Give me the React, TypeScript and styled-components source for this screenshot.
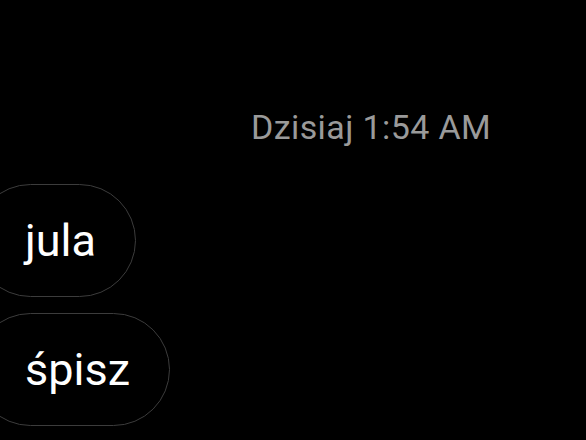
import styled, { createGlobalStyle } from "styled-components";

const GlobalStyle = createGlobalStyle`
  html, body {
    margin: 0;
    padding: 0;
    background: #000;
  }
  body {
    font-family: Roboto, "Noto Sans", sans-serif;
  }
`;

const Screen = styled.div`
  width: 586px;
  height: 440px;
  overflow: hidden;
  background: #000;
  display: flex;
  flex-direction: column;
`;

const Stamp = styled.div`
  margin-top: 105px;
  padding-left: 251px;
  font-size: 34px;
  letter-spacing: 0.4px;
  line-height: 44px;
  color: #9a9a9a;
`;

const Thread = styled.div`
  display: flex;
  flex-direction: column;
  align-items: flex-start;
  gap: 16px;
  margin-top: 35px;
  margin-left: -26px;
`;

const Bubble = styled.div`
  height: 111px;
  display: flex;
  align-items: center;
  padding: 0 39px 0 50px;
  border: 1.5px solid #3c3c3c;
  border-radius: 57px;
  color: #fff;
  font-size: 45px;
`;

const messages = ["jula", "śpisz"];

export default function App() {
  return (
    <Screen>
      <GlobalStyle />
      <Stamp>Dzisiaj 1:54 AM</Stamp>
      <Thread>
        {messages.map((m) => (
          <Bubble key={m}>{m}</Bubble>
        ))}
      </Thread>
    </Screen>
  );
}
